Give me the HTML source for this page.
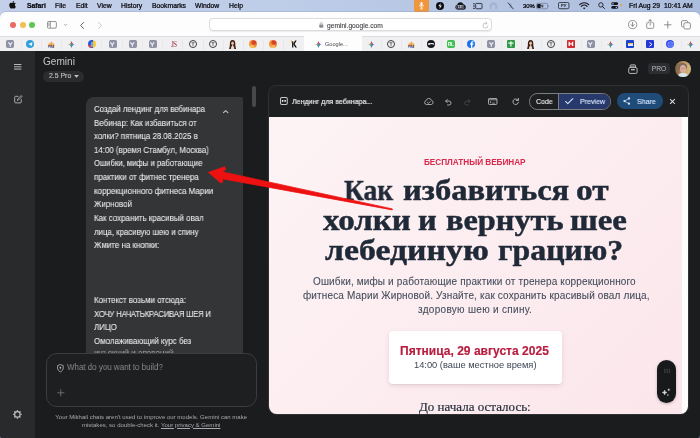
<!DOCTYPE html>
<html lang="en">
<head>
<meta charset="utf-8">
<title>Gemini</title>
<style>
*{box-sizing:border-box;margin:0;padding:0}
html,body{width:700px;height:438px;overflow:hidden;background:#5d6282}
body{position:relative;font-family:"Liberation Sans",sans-serif;color:#e3e3e3}
.a{position:absolute;white-space:pre;will-change:transform}
svg{position:absolute;overflow:visible;will-change:transform}
/* menu bar */
#menubar{left:0;top:0;width:700px;height:20px;background:linear-gradient(90deg,#c4cfe9 0%,#becde8 40%,#b8c7e3 58%,#acbddd 100%)}
.mb{font-size:6.800px;line-height:12px;top:-0.2px;color:#07070c;-webkit-text-stroke:0.24px #07070c}
/* safari window chrome */
#toolbar{left:0;top:11.800px;width:700px;height:26px;background:#fdfdfd;border-radius:5.500px 5.500px 0 0;box-shadow:0 -0.600px 0 rgba(120,140,185,.55)}
#tabbar{left:0;top:36.300px;width:700px;height:14.700px;background:#f0f0f2;border-top:0.900px solid #dcdcde}
.sep{top:39.500px;width:0.6px;height:9.500px;background:#e8e8eb}
.fav{top:40.5px;width:7.4px;height:7.4px;border-radius:1.6px}
/* page */
#page{left:0;top:51px;width:700px;height:387px;background:#1b1c1d;border-radius:0 0 3.600px 3.600px}
#sidebar{left:0;top:51px;width:35px;height:387px;background:#282a2c;border-radius:0 0 0 3.600px}

.ct{left:93.700px;font-size:9.1px;line-height:13.65px;color:#e8e8e8;-webkit-text-stroke:0.1px #e8e8e8;transform:scaleX(.874);transform-origin:0 50%}
.ic{stroke:#c4c7c5;fill:none}
#panel{left:267.8px;top:85.3px;width:421.2px;height:330px;border:1px solid #303133;border-radius:8.500px;background:#1e1f20;overflow:hidden}
#pink{left:0;top:30.5px;width:413.2px;height:300px;background:linear-gradient(135deg,#fdf3f5 0%,#fcedf0 50%,#fbe6eb 100%)}
#wstrip{left:413.2px;top:30.5px;width:6.2px;height:300px;background:#fdfdfd}
.h{font-family:"Liberation Serif",serif;font-weight:bold;font-size:30px;line-height:30px;color:#1f2937;transform-origin:0 0;-webkit-text-stroke:0.45px #1f2937}
.sub{font-size:10px;line-height:13.9px;letter-spacing:0.14px;color:#434c5b;-webkit-text-stroke:0.08px #434c5b}
</style>
</head>
<body>
<!-- MENU BAR -->
<div id="menubar" class="a"></div>
<svg style="left:10px;top:1.400px" width="6.500" height="7.800" viewBox="0 0 170 210"><path fill="#111" d="M150 161c-3 7-7 14-11 20-6 8-11 14-14 17-6 5-12 8-19 8-5 0-11-1-17-4-7-3-13-4-18-4-6 0-12 1-19 4-7 3-12 4-16 4-7 0-13-3-20-9-4-3-9-9-15-18-7-9-12-20-16-32-5-13-7-26-7-38 0-14 3-26 9-37 5-8 11-14 19-19s16-7 25-7c5 0 12 2 20 5s13 5 16 5c2 0 8-2 19-6 10-4 18-5 25-5 18 2 32 9 41 22-16 10-24 24-24 42 0 14 5 25 15 35 4 4 9 8 15 10-1 3-3 7-4 10zM109 4c0 11-4 21-12 31-9 11-21 18-33 17 0-1 0-3 0-4 0-10 4-21 12-30 4-5 9-8 15-11 6-3 12-5 17-5 1 1 1 2 1 2z"/></svg>
<div class="a mb" style="left:26.6px;font-weight:bold">Safari</div>
<div class="a mb" style="left:54.9px">File</div>
<div class="a mb" style="left:75.5px">Edit</div>
<div class="a mb" style="left:96.9px">View</div>
<div class="a mb" style="left:120.8px">History</div>
<div class="a mb" style="left:152.2px">Bookmarks</div>
<div class="a mb" style="left:194.9px">Window</div>
<div class="a mb" style="left:228.5px">Help</div>
<!-- right status icons -->
<div class="a" style="left:413.7px;top:0;width:14.6px;height:11.5px;background:#f0973d;border-radius:0 0 2px 2px"></div>
<svg style="left:418.6px;top:2px" width="5" height="7.5" viewBox="0 0 10 15"><rect x="3" y="0" width="4" height="8.5" rx="2" fill="#fff"/><path d="M1 6.5a4 4 0 0 0 8 0M5 10.5V13.5M2.8 13.8H7.2" stroke="#fff" stroke-width="1.2" fill="none" stroke-linecap="round"/></svg>
<div class="a" style="left:435.7px;top:1.9px;width:8.2px;height:8.2px;border-radius:50%;background:#0c0c10"></div>
<svg style="left:437.7px;top:3px" width="4.2" height="6" viewBox="0 0 7 10"><path d="M4.5 0L0.5 5.6H3.2L2.4 10L6.5 4.2H3.8Z" fill="#e8eaf6"/></svg>
<svg style="left:454.700px;top:1.300px" width="10.800" height="9.200" viewBox="0 0 21 17"><path d="M5 16.800a5 5 0 0 1-1-9.700A6.600 6.600 0 0 1 16.400 5.800a5.600 5.600 0 0 1 .3 11Z" fill="#111318"/><rect x="3.4" y="8.2" width="13.6" height="6.6" rx="1.2" fill="#111318" stroke="#c9cfe9" stroke-width="0.9"/><text x="10.2" y="13.6" font-family="Liberation Sans" font-weight="bold" font-size="5.6" text-anchor="middle" fill="#dfe3f5">240</text></svg>
<svg style="left:472.8px;top:3px" width="9.4" height="6.2" viewBox="0 0 19 12.4"><rect x="5.4" y="0.8" width="12.8" height="10.8" rx="1.6" fill="none" stroke="#14151c" stroke-width="1.6"/><path d="M0.8 1.6H3M0.8 6.2H3M0.8 10.8H3" stroke="#14151c" stroke-width="1.7" stroke-linecap="round"/></svg>
<svg style="left:489.4px;top:1.8px" width="9" height="8.4" viewBox="0 0 18 17"><circle cx="9" cy="8.5" r="8" fill="#a7b3d2"/><path d="M5.4 16V9.6a3.6 3.6 0 0 1 7.2 0V16" fill="#b7c4df"/></svg>
<svg style="left:507.4px;top:2px" width="7.4" height="8" viewBox="0 0 15 16"><path d="M5 4.6l5 4.6-2.7 2.7V3.4L10 6l-5 4.6" fill="none" stroke="#8d93b4" stroke-width="1"/><path d="M2.2 1.6l10.6 12.6" stroke="#15161d" stroke-width="1.5" stroke-linecap="round"/></svg>
<div class="a mb" style="left:522.8px;font-size:5.9px">30%</div>
<svg style="left:536.2px;top:2.9px" width="13.6" height="6.2" viewBox="0 0 27 12.4"><rect x="0.7" y="0.7" width="22.6" height="11" rx="3.2" fill="none" stroke="#6a6f8e" stroke-width="1.3"/><rect x="2.2" y="2.2" width="7.4" height="8" rx="1.6" fill="#14151c"/><path d="M24.8 4.2v4a2.2 2.2 0 0 0 0-4z" fill="#6a6f8e"/><path d="M13.6 0.6L8.6 7h3.6l-1.6 4.8 5.4-6.6h-3.6z" fill="#14151c" stroke="#b4c3e1" stroke-width="0.7"/></svg>
<svg style="left:558.3px;top:2.2px" width="11.4" height="7.2" viewBox="0 0 23 14.4"><rect x="0.9" y="0.9" width="21.2" height="12.6" rx="2.8" fill="none" stroke="#14151c" stroke-width="1.5"/><text x="11.5" y="10.6" font-family="Liberation Sans" font-weight="bold" font-size="8.6" text-anchor="middle" fill="#14151c">РУ</text></svg>
<svg style="left:578.6px;top:2.2px" width="10.4" height="7.4" viewBox="0 0 21 15"><path d="M1.2 5.2a13.4 13.4 0 0 1 18.6 0" fill="none" stroke="#14151c" stroke-width="2.3" stroke-linecap="round"/><path d="M4.6 8.8a8.4 8.4 0 0 1 11.8 0" fill="none" stroke="#14151c" stroke-width="2.3" stroke-linecap="round"/><path d="M7.9 12.2a3.8 3.8 0 0 1 5.2 0L10.5 14.8Z" fill="#14151c"/></svg>
<svg style="left:597.8px;top:2.4px" width="7" height="7" viewBox="0 0 14 14"><circle cx="5.8" cy="5.8" r="4.4" fill="none" stroke="#14151c" stroke-width="1.7"/><path d="M9.2 9.2L13 13" stroke="#14151c" stroke-width="1.9" stroke-linecap="round"/></svg>
<svg style="left:610.8px;top:2.2px" width="7.4" height="7.2" viewBox="0 0 15 14.4"><rect x="0.6" y="0.6" width="13.8" height="5.6" rx="2.8" fill="#14151c"/><circle cx="4" cy="3.4" r="1.6" fill="#b4c3e1"/><rect x="0.6" y="8.2" width="13.8" height="5.6" rx="2.8" fill="#14151c"/><circle cx="11" cy="11" r="1.6" fill="#b4c3e1"/></svg>
<div class="a" style="left:620.2px;top:4.4px;width:2.4px;height:2.4px;border-radius:50%;background:#f39a2f"></div>
<div class="a mb" style="left:629.4px">Fri Aug 29</div>
<div class="a mb" style="left:663.9px">10:41 AM</div>
<!-- SAFARI TOOLBAR -->
<div id="toolbar" class="a"></div>
<div class="a" style="left:9.700px;top:21.8px;width:6.2px;height:6.2px;border-radius:50%;background:#ec6a5e"></div>
<div class="a" style="left:19.500px;top:21.8px;width:6.2px;height:6.2px;border-radius:50%;background:#f4bf4f"></div>
<div class="a" style="left:29.200px;top:21.8px;width:6.2px;height:6.2px;border-radius:50%;background:#61c554"></div>
<svg style="left:47.4px;top:20.9px" width="9.8" height="7.6" viewBox="0 0 20 15.5"><rect x="0.9" y="0.9" width="18.2" height="13.7" rx="2.6" fill="none" stroke="#6b6b6f" stroke-width="1.5"/><path d="M6.8 1V14.5" stroke="#6b6b6f" stroke-width="1.4"/><path d="M2.8 4.2H4.9M2.8 6.6H4.9M2.8 9H4.9" stroke="#6b6b6f" stroke-width="1" stroke-linecap="round"/></svg>
<svg style="left:63.8px;top:23.8px" width="3.2" height="2.2" viewBox="0 0 8 5.4"><path d="M0.9 0.9L4 4.2L7.1 0.9" fill="none" stroke="#77777b" stroke-width="1.5" stroke-linecap="round" stroke-linejoin="round"/></svg>
<svg style="left:80.2px;top:21.5px" width="4.2" height="7" viewBox="0 0 8 13.4"><path d="M6.8 0.9L1.2 6.7L6.8 12.5" fill="none" stroke="#4e4e52" stroke-width="1.7" stroke-linecap="round" stroke-linejoin="round"/></svg>
<svg style="left:97.5px;top:21.5px" width="4.2" height="7" viewBox="0 0 8 13.4"><path d="M1.2 0.9L6.8 6.7L1.2 12.5" fill="none" stroke="#c2c2c6" stroke-width="1.7" stroke-linecap="round" stroke-linejoin="round"/></svg>
<div class="a" style="left:208.6px;top:18.2px;width:283px;height:13.4px;border-radius:4px;background:#fff;border:0.700px solid #dcdcdf;box-shadow:0 0.3px 0.8px rgba(0,0,0,.07)"></div>
<svg style="left:318.800px;top:21.900px" width="4.6" height="6" viewBox="0 0 9.2 12"><rect x="0.6" y="5" width="8" height="6.4" rx="1.3" fill="#8b8b90"/><path d="M2.4 5.2V3.4a2.2 2.2 0 0 1 4.4 0V5.2" fill="none" stroke="#8b8b90" stroke-width="1.3"/></svg>
<div class="a" style="left:326.6px;top:18.700px;font-size:6.65px;line-height:13px;color:#3c3c40;-webkit-text-stroke:0.1px #3c3c40">gemini.google.com</div>
<svg style="left:481.8px;top:21.6px" width="7.2" height="7.4" viewBox="0 0 14.4 14.8"><path d="M12 7.6A5 5 0 1 1 7.2 2.4H9.4" fill="none" stroke="#a9a9ae" stroke-width="1.3" stroke-linecap="round"/><path d="M7.6 0.4L10.2 2.5L7.6 4.8" fill="none" stroke="#a9a9ae" stroke-width="1.3" stroke-linecap="round" stroke-linejoin="round"/></svg>
<svg style="left:627.6px;top:19.8px" width="9.2" height="9.2" viewBox="0 0 18.4 18.4"><circle cx="9.2" cy="9.2" r="8.2" fill="none" stroke="#6a6a6f" stroke-width="1.4"/><path d="M9.2 4.6V12.2M5.9 9.2L9.2 12.6L12.5 9.2" fill="none" stroke="#6a6a6f" stroke-width="1.5" stroke-linecap="round" stroke-linejoin="round"/></svg>
<svg style="left:645.6px;top:19.300px" width="8.4" height="9.900" viewBox="0 0 16.8 21.6" preserveAspectRatio="none"><path d="M5.2 8H3.2A1.8 1.8 0 0 0 1.4 9.8V18.6A1.8 1.8 0 0 0 3.2 20.4H13.6A1.8 1.8 0 0 0 15.4 18.6V9.8A1.8 1.8 0 0 0 13.6 8H11.6" fill="none" stroke="#6a6a6f" stroke-width="1.5" stroke-linecap="round"/><path d="M8.4 13.6V1.6M5.2 4.6L8.4 1.4L11.6 4.6" fill="none" stroke="#6a6a6f" stroke-width="1.5" stroke-linecap="round" stroke-linejoin="round"/></svg>
<svg style="left:663.6px;top:20.6px" width="7.6" height="7.6" viewBox="0 0 15.2 15.2"><path d="M7.6 1V14.2M1 7.6H14.2" stroke="#6a6a6f" stroke-width="1.5" stroke-linecap="round"/></svg>
<svg style="left:681.4px;top:19.8px" width="10" height="9.6" viewBox="0 0 20 19.2"><rect x="5.8" y="5.4" width="13" height="12.6" rx="3" fill="#fbfbfb" stroke="#6a6a6f" stroke-width="1.5"/><path d="M3.8 13.8H3.6A2.6 2.6 0 0 1 1 11.2V3.8A2.6 2.6 0 0 1 3.6 1.2H11A2.6 2.6 0 0 1 13.6 3.4" fill="none" stroke="#6a6a6f" stroke-width="1.5" stroke-linecap="round"/></svg>
<div id="tabbar" class="a"></div>
<div class="a" style="left:303.6px;top:36.300px;width:57.6px;height:14.700px;background:#fdfdfd"></div>
<div class="a" style="left:6.0px;top:40.4px;width:7.6px;height:7.6px;border-radius:1.7px;background:#8f91a4"></div><svg style="left:7.5px;top:41.8px" width="4.6" height="4.8" viewBox="0 0 9 9.6"><path d="M0.600 0.600L4.500 5.200L8.400 0.600M4.500 4.800V9.400" stroke="#f4f4f7" stroke-width="2.200" fill="none" stroke-linejoin="miter"/></svg>
<div class="a" style="left:26.4px;top:40.2px;width:8px;height:8px;border-radius:50%;background:#2f9fd9"></div><svg style="left:27.8px;top:42px" width="4.8" height="4.4" viewBox="0 0 10 9"><path d="M0.3 4.2L9.4 0.4L7.8 8.4L5 6.4L3.8 7.8L3.6 5.4L7.4 2.2L2.6 5Z" fill="#fff"/></svg>
<svg style="left:46.70px;top:40.600px" width="8.600" height="7.600" viewBox="0 0 17.200 15.200"><path d="M4.600 2.400L1.200 10.400H8.400Z" fill="#f6b04c"/><path d="M8.600 0.200L4.600 10.400H13Z" fill="#ef8a2e"/><path d="M12.400 2.800L9.400 10.400H16Z" fill="#f4a03a"/><path d="M8.600 0.200L8.600 10.400H6Z" fill="#fbd092" opacity=".7"/><path d="M12.400 2.800V10.400H10.400Z" fill="#fbd092" opacity=".6"/><text x="8.600" y="15" font-family="Liberation Sans" font-weight="bold" font-size="5.600" text-anchor="middle" fill="#2c3a7c">PRA</text></svg>
<svg style="left:67.70px;top:40.90px" width="7.0" height="7.0" viewBox="0 0 20 20"><path d="M10 0C10.600 5.600 14.400 9.400 20 10C14.400 10.600 10.600 14.400 10 20C9.400 14.400 5.600 10.600 0 10C5.600 9.400 9.400 5.600 10 0Z" fill="#3f7ff1"/><path d="M10 0C10.400 3.800 12.200 6.600 15 8.400L9 9.500L6.200 7C8.400 5.400 9.600 3 10 0Z" fill="#e8453c"/><path d="M0 10C3.800 9.600 6.600 7.900 8.300 5.200L10 10L7 12.800C5.400 11.200 3 10.300 0 10Z" fill="#f5b32e"/><path d="M10 20C9.600 16.200 7.900 13.400 5.200 11.700L10 10.500L12.600 13.400C11.200 15 10.300 17.200 10 20Z" fill="#34a853"/><path d="M7.200 7.200L13 8.400L12.600 12.800L8 12.400Z" fill="#3f7ff1"/></svg>
<div class="a" style="left:87.600px;top:40.200px;width:8.200px;height:8.400px;border-radius:50%;background:linear-gradient(90deg,#2b5bda 0 62%,#f7cb2b 62% 100%);overflow:hidden"><div class="a" style="left:2.600px;top:2.200px;width:2.400px;height:5px;background:#6fa4f4"></div><div class="a" style="left:0;top:5.400px;width:2.800px;height:3px;background:#e8453c"></div></div>
<div class="a" style="left:108.6px;top:40.4px;width:7.6px;height:7.6px;border-radius:1.7px;background:#8f91a4"></div><svg style="left:110.1px;top:41.8px" width="4.6" height="4.8" viewBox="0 0 9 9.6"><path d="M0.600 0.600L4.500 5.200L8.400 0.600M4.500 4.800V9.400" stroke="#f4f4f7" stroke-width="2.200" fill="none" stroke-linejoin="miter"/></svg>
<div class="a" style="left:128.8px;top:40.4px;width:7.6px;height:7.6px;border-radius:1.7px;background:#8f91a4"></div><svg style="left:130.3px;top:41.8px" width="4.6" height="4.8" viewBox="0 0 9 9.6"><path d="M0.600 0.600L4.500 5.200L8.400 0.600M4.500 4.800V9.400" stroke="#f4f4f7" stroke-width="2.200" fill="none" stroke-linejoin="miter"/></svg>
<div class="a" style="left:148.9px;top:40.4px;width:7.6px;height:7.6px;border-radius:1.7px;background:#8f91a4"></div><svg style="left:150.4px;top:41.8px" width="4.6" height="4.8" viewBox="0 0 9 9.6"><path d="M0.600 0.600L4.500 5.200L8.400 0.600M4.500 4.800V9.400" stroke="#f4f4f7" stroke-width="2.200" fill="none" stroke-linejoin="miter"/></svg>
<div class="a" style="left:169.800px;top:39.800px;width:7px;font-size:7.400px;line-height:9px;color:#a23c4a;text-align:center;letter-spacing:-0.900px;font-family:'Liberation Serif',serif">ЈS</div>
<div class="a" style="left:189.3px;top:40.1px;width:8.2px;height:8.2px;border-radius:50%;border:0.7px solid #3a3a3e;background:#f6f6f8"></div><svg style="left:191.4px;top:42.2px" width="4" height="4.200" viewBox="0 0 8 8.4"><path d="M0.8 1.400H7.200M4 1.400V8" stroke="#2e2e32" stroke-width="1.350" fill="none"/></svg>
<div class="a" style="left:209.1px;top:40.1px;width:8.2px;height:8.2px;border-radius:50%;border:0.7px solid #3a3a3e;background:#f6f6f8"></div><svg style="left:211.2px;top:42.2px" width="4" height="4.200" viewBox="0 0 8 8.4"><path d="M0.8 1.400H7.200M4 1.400V8" stroke="#2e2e32" stroke-width="1.350" fill="none"/></svg>
<svg style="left:229.4px;top:39.8px" width="7.2" height="9" viewBox="0 0 14 18"><path d="M7 0C2.6 0 1.4 4 1.6 8C1.8 12 0.6 15 0 18H14C13.4 15 12.2 12 12.4 8C12.6 4 11.4 0 7 0Z" fill="#3a1f16"/><ellipse cx="7" cy="6.4" rx="2.7" ry="3.5" fill="#e9c2a6"/><path d="M3.6 18C3.8 13.6 5.2 11.6 7 11.6S10.2 13.6 10.4 18Z" fill="#ead9cc"/><path d="M5.8 9.6H8.2V12.2H5.8Z" fill="#e2b697"/></svg>
<div class="a" style="left:248.9px;top:40.1px;width:8.2px;height:8.2px;border-radius:50%;background:radial-gradient(circle at 62% 30%,#d9402c 0 22%,#ee8a2e 40%,#f2a23a 70%,#d9761f 100%)"></div><div class="a" style="left:250.4px;top:44.6px;width:4.4px;height:2.6px;border-radius:50%;background:#f7c46a;opacity:.8"></div>
<div class="a" style="left:269.0px;top:40.1px;width:8.2px;height:8.2px;border-radius:50%;background:radial-gradient(circle at 62% 30%,#d9402c 0 22%,#ee8a2e 40%,#f2a23a 70%,#d9761f 100%)"></div><div class="a" style="left:270.5px;top:44.6px;width:4.4px;height:2.6px;border-radius:50%;background:#f7c46a;opacity:.8"></div>
<svg style="left:289.6px;top:40.4px" width="7.4" height="7.8" viewBox="0 0 15 16"><path d="M1 0.6L6.4 3.8L3.2 6Z" fill="#f29a1f"/><path d="M4.2 3V15.4H6.8V3Z" fill="#141414"/><path d="M13.6 1H10.4L6.2 8.4L10.8 15.4H14.2L9.4 8.2Z" fill="#141414"/></svg>
<div class="a sep" style="left:20.5px"></div>
<div class="a sep" style="left:40.7px"></div>
<div class="a sep" style="left:60.9px"></div>
<div class="a sep" style="left:81.2px"></div>
<div class="a sep" style="left:101.4px"></div>
<div class="a sep" style="left:121.6px"></div>
<div class="a sep" style="left:141.8px"></div>
<div class="a sep" style="left:162.0px"></div>
<div class="a sep" style="left:182.3px"></div>
<div class="a sep" style="left:202.5px"></div>
<div class="a sep" style="left:222.7px"></div>
<div class="a sep" style="left:242.9px"></div>
<div class="a sep" style="left:263.1px"></div>
<div class="a sep" style="left:283.4px"></div>
<svg style="left:315.40px;top:40.90px" width="7.0" height="7.0" viewBox="0 0 20 20"><path d="M10 0C10.600 5.600 14.400 9.400 20 10C14.400 10.600 10.600 14.400 10 20C9.400 14.400 5.600 10.600 0 10C5.600 9.400 9.400 5.600 10 0Z" fill="#3f7ff1"/><path d="M10 0C10.400 3.800 12.200 6.600 15 8.400L9 9.500L6.200 7C8.400 5.400 9.600 3 10 0Z" fill="#e8453c"/><path d="M0 10C3.800 9.600 6.600 7.900 8.300 5.200L10 10L7 12.800C5.400 11.200 3 10.300 0 10Z" fill="#f5b32e"/><path d="M10 20C9.600 16.200 7.900 13.400 5.200 11.700L10 10.500L12.600 13.400C11.200 15 10.300 17.200 10 20Z" fill="#34a853"/><path d="M7.200 7.200L13 8.400L12.600 12.800L8 12.400Z" fill="#3f7ff1"/></svg>
<div class="a" style="left:325.2px;top:40.2px;font-size:5.600px;line-height:8px;color:#48484c">Google...</div>
<svg style="left:368.00px;top:40.90px" width="7.0" height="7.0" viewBox="0 0 20 20"><path d="M10 0C10.600 5.600 14.400 9.400 20 10C14.400 10.600 10.600 14.400 10 20C9.400 14.400 5.600 10.600 0 10C5.600 9.400 9.400 5.600 10 0Z" fill="#3f7ff1"/><path d="M10 0C10.400 3.800 12.200 6.600 15 8.400L9 9.500L6.200 7C8.400 5.400 9.600 3 10 0Z" fill="#e8453c"/><path d="M0 10C3.800 9.600 6.600 7.900 8.300 5.200L10 10L7 12.800C5.400 11.200 3 10.300 0 10Z" fill="#f5b32e"/><path d="M10 20C9.600 16.200 7.900 13.400 5.200 11.700L10 10.500L12.600 13.400C11.200 15 10.300 17.200 10 20Z" fill="#34a853"/><path d="M7.200 7.200L13 8.400L12.600 12.800L8 12.400Z" fill="#3f7ff1"/></svg>
<div class="a" style="left:387.2px;top:40.1px;width:8.2px;height:8.2px;border-radius:50%;border:0.7px solid #3a3a3e;background:#f6f6f8"></div><svg style="left:389.3px;top:42.2px" width="4" height="4.200" viewBox="0 0 8 8.4"><path d="M0.8 1.400H7.200M4 1.400V8" stroke="#2e2e32" stroke-width="1.350" fill="none"/></svg>
<svg style="left:407.10px;top:40.600px" width="8.600" height="7.600" viewBox="0 0 17.200 15.200"><path d="M4.600 2.400L1.200 10.400H8.400Z" fill="#f6b04c"/><path d="M8.600 0.200L4.600 10.400H13Z" fill="#ef8a2e"/><path d="M12.400 2.800L9.400 10.400H16Z" fill="#f4a03a"/><path d="M8.600 0.200L8.600 10.400H6Z" fill="#fbd092" opacity=".7"/><path d="M12.400 2.800V10.400H10.400Z" fill="#fbd092" opacity=".6"/><text x="8.600" y="15" font-family="Liberation Sans" font-weight="bold" font-size="5.600" text-anchor="middle" fill="#2c3a7c">PRA</text></svg>
<div class="a" style="left:427.2px;top:40.1px;width:8.2px;height:8.2px;border-radius:50%;background:#17181c"></div><div class="a" style="left:428.4px;top:43.2px;width:5.8px;height:1.900px;border-radius:1px;background:#dcdce0"></div><div class="a" style="left:429.7px;top:43.9px;width:3.2px;height:1px;background:#4a4b52"></div>
<div class="a" style="left:447.3px;top:40.400px;width:7.8px;height:7.8px;border-radius:1.8px;background:#3fbf52"></div><svg style="left:447.3px;top:40.400px" width="7.800" height="7.800" viewBox="0 0 15.600 15.600"><text x="7.600" y="11.800" font-family="Liberation Sans" font-weight="bold" font-size="10" text-anchor="middle" fill="#f4fff5" letter-spacing="-0.600">RL</text></svg>
<div class="a" style="left:466.9px;top:40.1px;width:8.2px;height:8.2px;border-radius:50%;background:#1b74ee"></div><svg style="left:469.5px;top:41.4px" width="3.8" height="7" viewBox="0 0 7.6 14"><path d="M2 14V7.6H0.2V5.2H2V3.6C2 1.4 3.2 0.4 5.2 0.4C6 0.4 6.8 0.5 7 0.6V2.6H5.8C4.9 2.6 4.7 3 4.7 3.8V5.2H6.9L6.6 7.6H4.7V14Z" fill="#fff"/></svg>
<div class="a" style="left:487.1px;top:40.4px;width:7.6px;height:7.6px;border-radius:1.7px;background:#8f91a4"></div><svg style="left:488.6px;top:41.8px" width="4.6" height="4.8" viewBox="0 0 9 9.6"><path d="M0.600 0.600L4.500 5.200L8.400 0.600M4.500 4.800V9.400" stroke="#f4f4f7" stroke-width="2.200" fill="none" stroke-linejoin="miter"/></svg>
<div class="a" style="left:506.9px;top:40.3px;width:7.8px;height:7.8px;border-radius:1px;background:#2f9a44"></div><svg style="left:507.9px;top:41.3px" width="5.8" height="5.8" viewBox="0 0 12 12"><path d="M6 0.600V11.400M0.600 4.600H11.400" stroke="#eefaf0" stroke-width="2.600" fill="none"/></svg>
<svg style="left:526.9px;top:39.8px" width="7.2" height="9" viewBox="0 0 14 18"><path d="M7 0C2.6 0 1.4 4 1.6 8C1.8 12 0.6 15 0 18H14C13.4 15 12.2 12 12.4 8C12.6 4 11.4 0 7 0Z" fill="#3a1f16"/><ellipse cx="7" cy="6.4" rx="2.7" ry="3.5" fill="#e9c2a6"/><path d="M3.6 18C3.8 13.6 5.2 11.6 7 11.6S10.2 13.6 10.4 18Z" fill="#ead9cc"/><path d="M5.8 9.6H8.2V12.2H5.8Z" fill="#e2b697"/></svg>
<div class="a" style="left:546.5px;top:40.1px;width:8.2px;height:8.2px;border-radius:50%;border:0.7px solid #3a3a3e;background:#f6f6f8"></div><svg style="left:548.6px;top:42.2px" width="4" height="4.200" viewBox="0 0 8 8.4"><path d="M0.8 1.400H7.200M4 1.400V8" stroke="#2e2e32" stroke-width="1.350" fill="none"/></svg>
<div class="a" style="left:566.6px;top:40.400px;width:7.8px;height:7.8px;border-radius:0.8px;background:#d22b2f"></div><svg style="left:566.6px;top:40.400px" width="7.800" height="7.800" viewBox="0 0 15.600 15.600"><path d="M4.400 3.400V12.200M11.200 3.400V12.200M4.400 7.800H11.200" stroke="#fff" stroke-width="2.600" fill="none"/></svg>
<div class="a" style="left:586.8px;top:40.4px;width:7.6px;height:7.6px;border-radius:1.7px;background:#8f91a4"></div><svg style="left:588.3px;top:41.8px" width="4.6" height="4.8" viewBox="0 0 9 9.6"><path d="M0.600 0.600L4.500 5.200L8.400 0.600M4.500 4.800V9.400" stroke="#f4f4f7" stroke-width="2.200" fill="none" stroke-linejoin="miter"/></svg>
<svg style="left:606.90px;top:40.90px" width="7.0" height="7.0" viewBox="0 0 20 20"><path d="M10 0C10.600 5.600 14.400 9.400 20 10C14.400 10.600 10.600 14.400 10 20C9.400 14.400 5.600 10.600 0 10C5.600 9.400 9.400 5.600 10 0Z" fill="#3f7ff1"/><path d="M10 0C10.400 3.800 12.200 6.600 15 8.400L9 9.500L6.200 7C8.400 5.400 9.600 3 10 0Z" fill="#e8453c"/><path d="M0 10C3.800 9.600 6.600 7.900 8.300 5.200L10 10L7 12.800C5.400 11.200 3 10.300 0 10Z" fill="#f5b32e"/><path d="M10 20C9.600 16.200 7.900 13.400 5.200 11.700L10 10.500L12.600 13.400C11.200 15 10.300 17.200 10 20Z" fill="#34a853"/><path d="M7.200 7.200L13 8.400L12.600 12.800L8 12.400Z" fill="#3f7ff1"/></svg>
<div class="a" style="left:626.3px;top:40.3px;width:7.8px;height:7.8px;border-radius:1px;background:#1c43d2"></div><div class="a" style="left:627.8px;top:42.6px;width:4.8px;height:3.2px;background:#dfe6ff;border-top:1px solid #f3c344"></div>
<div class="a" style="left:646.4px;top:40.3px;width:7.8px;height:7.8px;border-radius:1px;background:#2538d6"></div><svg style="left:648.7px;top:41.8px" width="3.6" height="4.8" viewBox="0 0 7.2 9.6"><path d="M1 1L5.8 4.8L1 8.6" fill="none" stroke="#fff" stroke-width="2" stroke-linejoin="miter"/></svg>
<div class="a" style="left:666.1px;top:40.1px;width:8.2px;height:8.2px;border-radius:50%;background:#2a49e8"></div><div class="a" style="left:667.9px;top:41.9px;width:4.6px;height:4.6px;border-radius:50%;background:#5a70f2;box-shadow:0 0 0 0.500px #8fa0f7"></div>
<svg style="left:686.50px;top:40.90px" width="7.0" height="7.0" viewBox="0 0 20 20"><path d="M10 0C10.600 5.600 14.400 9.400 20 10C14.400 10.600 10.600 14.400 10 20C9.400 14.400 5.600 10.600 0 10C5.600 9.400 9.400 5.600 10 0Z" fill="#3f7ff1"/><path d="M10 0C10.400 3.800 12.200 6.600 15 8.400L9 9.500L6.200 7C8.400 5.400 9.600 3 10 0Z" fill="#e8453c"/><path d="M0 10C3.800 9.600 6.600 7.900 8.300 5.200L10 10L7 12.800C5.400 11.200 3 10.300 0 10Z" fill="#f5b32e"/><path d="M10 20C9.600 16.200 7.900 13.400 5.200 11.700L10 10.500L12.600 13.400C11.200 15 10.300 17.200 10 20Z" fill="#34a853"/><path d="M7.200 7.200L13 8.400L12.600 12.800L8 12.400Z" fill="#3f7ff1"/></svg>
<div class="a sep" style="left:381.4px"></div>
<div class="a sep" style="left:401.4px"></div>
<div class="a sep" style="left:421.4px"></div>
<div class="a sep" style="left:441.3px"></div>
<div class="a sep" style="left:461.3px"></div>
<div class="a sep" style="left:481.3px"></div>
<div class="a sep" style="left:501.3px"></div>
<div class="a sep" style="left:521.3px"></div>
<div class="a sep" style="left:541.2px"></div>
<div class="a sep" style="left:561.2px"></div>
<div class="a sep" style="left:581.2px"></div>
<div class="a sep" style="left:601.2px"></div>
<div class="a sep" style="left:621.2px"></div>
<div class="a sep" style="left:641.1px"></div>
<div class="a sep" style="left:661.1px"></div>
<div class="a sep" style="left:681.1px"></div>
<!-- PAGE -->
<div id="page" class="a"></div>
<div id="sidebar" class="a"></div>
<!-- sidebar icons -->
<svg style="left:13.7px;top:63.900px" width="7.4" height="5.6" viewBox="0 0 15 11.2"><path d="M0 1H15M0 5.6H15M0 10.2H15" stroke="#c4c7c5" stroke-width="1.9"/></svg>
<svg style="left:13.6px;top:95.2px" width="8.6" height="8.6" viewBox="0 0 17 17"><path d="M8 2.6H3.2A1.8 1.8 0 0 0 1.4 4.4V13.8A1.8 1.8 0 0 0 3.2 15.6H12.6A1.8 1.8 0 0 0 14.4 13.8V9" class="ic" stroke-width="1.6" stroke-linecap="round"/><path d="M6.6 10.6L7.2 8L13.4 1.8A1.2 1.2 0 0 1 15.2 3.6L9 9.8Z" class="ic" stroke-width="1.5" stroke-linejoin="round"/></svg>
<svg style="left:13px;top:410.300px" width="8.800" height="8.800" viewBox="0 0 20 20"><circle cx="10" cy="10" r="6.200" fill="none" stroke="#c4c7c5" stroke-width="2.500"/><path d="M17.20 10.00L19.70 10.00M15.09 15.09L16.86 16.86M10.00 17.20L10.00 19.70M4.91 15.09L3.14 16.86M2.80 10.00L0.30 10.00M4.91 4.91L3.14 3.14M10.00 2.80L10.00 0.30M15.09 4.91L16.86 3.14" stroke="#c4c7c5" stroke-width="3" fill="none"/></svg>
<!-- header -->
<div class="a" style="left:42.9px;top:55.6px;font-size:10.1px;line-height:12px;color:#c2c4c6">Gemini</div>
<div class="a" style="left:42.8px;top:71.2px;width:41.2px;height:10.8px;border-radius:5.4px;background:#2a2c2e"></div>
<div class="a" style="left:48.8px;top:71.2px;font-size:6.900px;line-height:10.8px;color:#c0c3c6;-webkit-text-stroke:0.12px #c0c3c6">2.5 Pro</div>
<svg style="left:74.300px;top:75.300px" width="5" height="2.700" viewBox="0 0 9 5"><path d="M0 0H9L4.5 5Z" fill="#c0c3c6"/></svg>
<svg style="left:627.8px;top:63.6px" width="9.8" height="10.2" viewBox="0 0 20 21"><path d="M4.6 7.4V3.2A1.4 1.4 0 0 1 6 1.8H14A1.4 1.4 0 0 1 15.400 3.2V7.400" class="ic" stroke-width="1.9"/><rect x="1.400" y="7.400" width="17.200" height="12" rx="2.400" class="ic" stroke-width="1.9"/><path d="M6 11.8H14" class="ic" stroke-width="2.600"/><path d="M6 4.800H14" class="ic" stroke-width="1.400"/></svg>
<div class="a" style="left:648px;top:63.1px;width:21.9px;height:11.3px;border-radius:3.6px;background:#2c2d30"></div>
<div class="a" style="left:648px;top:63.1px;width:21.9px;font-size:6.7px;line-height:11.5px;color:#b9bcc0;text-align:center">PRO</div>
<div class="a" style="left:674.500px;top:60.600px;width:16px;height:16.200px;border-radius:50%;background:linear-gradient(90deg,#7c5e40 0%,#a17c52 30%,#c7a569 68%,#d8bd86 100%);overflow:hidden"><div class="a" style="left:3.400px;top:2.200px;width:9px;height:7.400px;border-radius:50%;background:#7f6c5c"></div><div class="a" style="left:4.800px;top:4.200px;width:6.200px;height:8.200px;border-radius:46%;background:#d9aa99"></div><div class="a" style="left:5.800px;top:7.400px;width:4.200px;height:1px;background:#b98274;opacity:.6"></div><div class="a" style="left:2.800px;top:12.400px;width:10.400px;height:5px;border-radius:4px 4px 0 0;background:#d6e6ee"></div></div>
<!-- chat -->
<div class="a" style="left:85.5px;top:97px;width:157.2px;height:262px;border-radius:8px 2px 0 0;background:#333537"></div>
<div class="a ct" style="top:102.87px;transform:scaleX(0.8644)">Создай лендинг для вебинара</div>
<div class="a ct" style="top:116.52px">Вебинар: Как избавиться от</div>
<div class="a ct" style="top:130.17px;transform:scaleX(0.8574)">холки? пятница 28.08.2025 в</div>
<div class="a ct" style="top:143.82px;transform:scaleX(0.8661)">14:00 (время Стамбул, Москва)</div>
<div class="a ct" style="top:157.47px;transform:scaleX(0.8469)">Ошибки, мифы и работающие</div>
<div class="a ct" style="top:171.12px">практики от фитнес тренера</div>
<div class="a ct" style="top:184.77px">коррекционного фитнеса Марии</div>
<div class="a ct" style="top:198.42px">Жирновой</div>
<div class="a ct" style="top:212.07px">Как сохранить красивый овал</div>
<div class="a ct" style="top:225.72px;transform:scaleX(0.8618)">лица, красивую шею и спину</div>
<div class="a ct" style="top:239.37px">Жмите на кнопки:</div>
<div class="a ct" style="top:293.97px">Контекст возьми отсюда:</div>
<div class="a ct" style="top:307.62px;letter-spacing:-0.36px">ХОЧУ НАЧАТЬКРАСИВАЯ ШЕЯ И</div>
<div class="a ct" style="top:321.27px">ЛИЦО</div>
<div class="a ct" style="top:334.92px">Омолаживающий курс без</div>
<div class="a ct" style="top:346.97px;color:#a8a8a8;-webkit-text-stroke:0">инъекций и операций</div>
<svg style="left:222.700px;top:110.200px" width="5.400" height="3.200" viewBox="0 0 10.400 6"><path d="M1 5L5.200 1L9.400 5" class="ic" stroke="#dcdedf" stroke-width="2" stroke-linecap="round" stroke-linejoin="round"/></svg>
<div class="a" style="left:252.100px;top:86px;width:3.800px;height:21px;border-radius:1.900px;background:#46484a"></div>
<!-- input -->
<div class="a" style="left:46px;top:353.300px;width:211px;height:53.800px;border-radius:10.500px;background:#1e1f20;border:0.9px solid #3b3d40"></div>
<svg style="left:56.6px;top:363.7px" width="6.8" height="8.400" viewBox="0 0 14 17"><path d="M7 1L12.800 3.200V8C12.800 11.800 10.400 14.600 7 16C3.600 14.600 1.200 11.800 1.200 8V3.200Z" class="ic" stroke-width="1.600" stroke-linejoin="round"/><circle cx="7" cy="7" r="1.700" fill="#c4c7c5"/><path d="M7 8V11" stroke="#c4c7c5" stroke-width="1.400"/></svg>
<div class="a" style="left:66.8px;top:361.200px;font-size:9.1px;line-height:12px;color:#888b8f;transform:scaleX(.874);transform-origin:0 50%">What do you want to build?</div>
<svg style="left:56.7px;top:389px" width="7.600" height="7.600" viewBox="0 0 15 15"><path d="M7.500 0.500V14.500M0.500 7.500H14.500" stroke="#7d8084" stroke-width="1.500"/></svg>
<div class="a" style="left:46.4px;top:414.400px;width:210.4px;font-size:6.04px;line-height:7.600px;color:#a6a9ad;text-align:center;white-space:pre-line">Your Mikhail chats aren't used to improve our models. Gemini can make
mistakes, so double-check it. <span style="text-decoration:underline">Your privacy &amp; Gemini</span></div>
<!-- preview panel -->
<div id="panel" class="a">
<div id="pink" class="a"></div>
<div id="wstrip" class="a"></div>
</div>


<!-- panel header -->
<svg style="left:279.700px;top:97.200px" width="7.800" height="7.900" viewBox="0 0 14.400 14.800"><rect x="0.900" y="0.900" width="12.600" height="13" rx="2.200" class="ic" stroke="#ededed" stroke-width="2"/><rect x="3.500" y="5.600" width="2.700" height="3.400" fill="#f0f0f0"/><rect x="8.200" y="5.600" width="2.700" height="3.400" fill="#f0f0f0"/></svg>
<div class="a" id="ptitle" style="left:291.9px;top:95.600px;font-size:7.8px;line-height:12px;color:#e8e8e8;-webkit-text-stroke:0.2px #e8e8e8;transform:scaleX(.91);transform-origin:0 50%">Лендинг для вебинара...</div>
<svg style="left:423.7px;top:98.2px" width="9.500" height="7" viewBox="0 0 19 14"><path d="M5 13A4 4 0 0 1 4.400 5.100A5.400 5.400 0 0 1 14.800 4.600A4.300 4.300 0 0 1 14.600 13Z" class="ic" stroke-width="1.600" stroke-linejoin="round"/><path d="M6.800 9L8.800 10.800L12.400 7" class="ic" stroke-width="1.500" stroke-linecap="round" stroke-linejoin="round"/></svg>
<svg style="left:444.700px;top:98.900px" width="6.800" height="6.400" viewBox="0 0 14 13.600"><path d="M4.600 1L1.200 4.400L4.600 7.800" class="ic" stroke-width="1.700" stroke-linecap="round" stroke-linejoin="round"/><path d="M1.600 4.400H8.400A4.200 4.200 0 0 1 8.400 12.800H5" class="ic" stroke-width="1.700" stroke-linecap="round"/></svg>
<svg style="left:463.500px;top:98.900px" width="6.800" height="6.400" viewBox="0 0 14 13.600"><path d="M9.400 1L12.800 4.400L9.400 7.800" fill="none" stroke="#4b4d50" stroke-width="1.700" stroke-linecap="round" stroke-linejoin="round"/><path d="M12.400 4.400H5.600A4.200 4.200 0 0 0 5.600 12.800H9" fill="none" stroke="#4b4d50" stroke-width="1.700" stroke-linecap="round"/></svg>
<svg style="left:487.7px;top:98.300px" width="9.400" height="6.900" viewBox="0 0 18.800 13.800"><rect x="0.900" y="0.900" width="17" height="12" rx="1.800" class="ic" stroke-width="1.700"/><path d="M1 3.600H17.800" class="ic" stroke-width="1.500"/><path d="M3.800 6.400L6.200 8.200L3.800 10" class="ic" stroke-width="1.300" stroke-linejoin="round"/><path d="M8 10.200H14" class="ic" stroke-width="1.300"/></svg>
<svg style="left:512.3px;top:98.100px" width="7.200" height="7.400" viewBox="0 0 14.400 14.800"><path d="M12.200 4.400A5.600 5.600 0 1 0 13 8.600" class="ic" stroke-width="1.700" stroke-linecap="round"/><path d="M12.800 0.800V4.800H8.800" class="ic" stroke-width="1.700" stroke-linecap="round" stroke-linejoin="round"/></svg>
<div class="a" style="left:529.3px;top:93.2px;width:81.800px;height:16.500px;border-radius:8.250px;border:0.8px solid #7a7d81;overflow:hidden;background:#1e1f20"><div class="a" style="left:28.4px;top:0;width:54px;height:16px;background:#283a6b;border-left:0.7px solid #7a7d81"></div></div>
<div class="a" style="left:535.8px;top:95.800px;font-size:7.7px;line-height:12px;color:#e6e6e6;-webkit-text-stroke:0.15px #e6e6e6;transform:scaleX(.915);transform-origin:0 50%">Code</div>
<svg style="left:565.2px;top:98.400px" width="8.400" height="6.400" viewBox="0 0 16.800 12.800"><path d="M1.200 7L5.600 11.400L15.600 1.400" fill="none" stroke="#d3e3fd" stroke-width="2.100" stroke-linecap="round" stroke-linejoin="round"/></svg>
<div class="a" style="left:579.7px;top:95.800px;font-size:7.7px;line-height:12px;color:#d3e3fd;-webkit-text-stroke:0.15px #d3e3fd;transform:scaleX(.915);transform-origin:0 50%">Preview</div>
<div class="a" style="left:616.9px;top:93.2px;width:45.700px;height:16.200px;border-radius:8.100px;background:#1f4b78"></div>
<svg style="left:622.8px;top:97.400px" width="7.600" height="8.200" viewBox="0 0 15.200 16.400"><circle cx="12" cy="3" r="2.300" fill="#d3e3fd"/><circle cx="3" cy="8.200" r="2.300" fill="#d3e3fd"/><circle cx="12" cy="13.400" r="2.300" fill="#d3e3fd"/><path d="M12 3L3 8.200L12 13.400" fill="none" stroke="#d3e3fd" stroke-width="1.400"/></svg>
<div class="a" style="left:636.5px;top:95.800px;font-size:7.7px;line-height:12px;color:#d3e3fd;-webkit-text-stroke:0.15px #d3e3fd;transform:scaleX(.915);transform-origin:0 50%">Share</div>
<svg style="left:669.9px;top:99px" width="5" height="5" viewBox="0 0 10 10"><path d="M1 1L9 9M9 1L1 9" stroke="#e6e6e6" stroke-width="2.100" stroke-linecap="square"/></svg>
<!-- panel content -->
<div class="a" id="lbl" style="left:424.4px;top:156.900px;font-size:8.2px;line-height:12px;font-weight:bold;letter-spacing:-0.02px;color:#d9294d">БЕСПЛАТНЫЙ ВЕБИНАР</div>
<div class="a h" style="left:344.0px;top:175.2px;transform:scaleX(0.9167)">Как</div>
<div class="a h" style="left:402.71px;top:175.2px;transform:scaleX(1.0868)">избавиться</div>
<div class="a h" style="left:576.39px;top:175.2px;transform:scaleX(1.1107)">от</div>
<div class="a h" style="left:323.2px;top:205.2px;transform:scaleX(1.1)">холки</div>
<div class="a h" style="left:418.32px;top:205.2px;transform:scaleX(1.0813)">и</div>
<div class="a h" style="left:445.50px;top:205.2px;transform:scaleX(1.0778)">вернуть</div>
<div class="a h" style="left:570.1px;top:205.2px;transform:scaleX(1.0961)">шее</div>
<div class="a h" style="left:325.1px;top:235.0px;transform:scaleX(1.1264)">лебединую</div>
<div class="a h" style="left:498.44px;top:235.0px;transform:scaleX(1.0626)">грацию?</div>
<div class="a sub" id="p1" style="left:313.1px;top:275.3px">Ошибки, мифы и работающие практики от тренера коррекционного</div>
<div class="a sub" id="p2" style="left:302.8px;top:289.2px">фитнеса Марии Жирновой. Узнайте, как сохранить красивый овал лица,</div>
<div class="a sub" id="p3" style="left:418.4px;top:303.1px;letter-spacing:0.3px">здоровую шею и спину.</div>
<div class="a" style="left:388.600px;top:331.200px;width:173.400px;height:52.500px;border-radius:3.800px;background:#fff;box-shadow:0 2px 5px rgba(120,70,90,.14),0 0.5px 1.5px rgba(0,0,0,.06)"></div>
<div class="a" id="date" style="left:400.4px;top:342.6px;font-size:12px;line-height:16px;font-weight:bold;letter-spacing:0.02px;color:#b81d3f;-webkit-text-stroke:0.18px #b81d3f">Пятница, 29 августа 2025</div>
<div class="a" id="time" style="left:413.500px;top:359.400px;font-size:9.3px;line-height:12px;color:#3e4655">14:00 (ваше местное время)</div>
<div class="a" id="left" style="left:418.8px;top:399px;font-family:'Liberation Serif',serif;font-size:13px;line-height:16px;color:#1f2937;-webkit-text-stroke:0.2px #1f2937">До начала осталось:</div>
<div class="a" style="left:656.8px;top:359.900px;width:19.300px;height:43.200px;border-radius:9.650px;background:#18191b;box-shadow:0 1px 3px rgba(0,0,0,.25)"></div>
<svg style="left:663.500px;top:369.400px" width="6.200" height="3.800" viewBox="0 0 12.400 7.600"><g fill="#55575b"><rect x="0.400" y="0.400" width="2.400" height="2.400"/><rect x="5" y="0.400" width="2.400" height="2.400"/><rect x="9.600" y="0.400" width="2.400" height="2.400"/><rect x="0.400" y="4.800" width="2.400" height="2.400"/><rect x="5" y="4.800" width="2.400" height="2.400"/><rect x="9.600" y="4.800" width="2.400" height="2.400"/></g></svg>
<svg style="left:662.300px;top:387.800px" width="9" height="9" viewBox="0 0 18 18"><path d="M5.200 4.600C5.900 7.400 6.800 8.300 9.600 9C6.800 9.700 5.900 10.600 5.200 13.400C4.500 10.600 3.600 9.700 0.800 9C3.600 8.300 4.500 7.400 5.200 4.600Z" fill="#dcdddf" stroke="#dcdddf" stroke-width="1.400" stroke-linejoin="round"/><path d="M13.600 1C14 2.700 14.500 3.200 16.200 3.600C14.500 4 14 4.500 13.600 6.200C13.200 4.500 12.700 4 11 3.600C12.700 3.200 13.200 2.700 13.600 1Z" fill="#dcdddf" stroke="#dcdddf" stroke-width="0.600" stroke-linejoin="round"/><path d="M11.800 12.400C12.050 13.500 12.400 13.850 13.500 14.100C12.400 14.350 12.050 14.700 11.800 15.800C11.550 14.700 11.200 14.350 10.100 14.100C11.200 13.850 11.550 13.500 11.800 12.400Z" fill="#dcdddf" stroke="#dcdddf" stroke-width="0.400"/></svg>
<!-- red arrow annotation -->
<svg id="arrow" style="left:0;top:0" width="700" height="438" viewBox="0 0 700 438"><path d="M208.5 172.400L224.600 166.700L225.700 169.300L222.600 171.900L392.300 208.900L392.300 209.900L221.900 178.700L223.200 181.300L220.900 183.100Z" fill="#ee1111" stroke="#ee1111" stroke-width="0.800" stroke-linejoin="round"/></svg>
</body>
</html>
